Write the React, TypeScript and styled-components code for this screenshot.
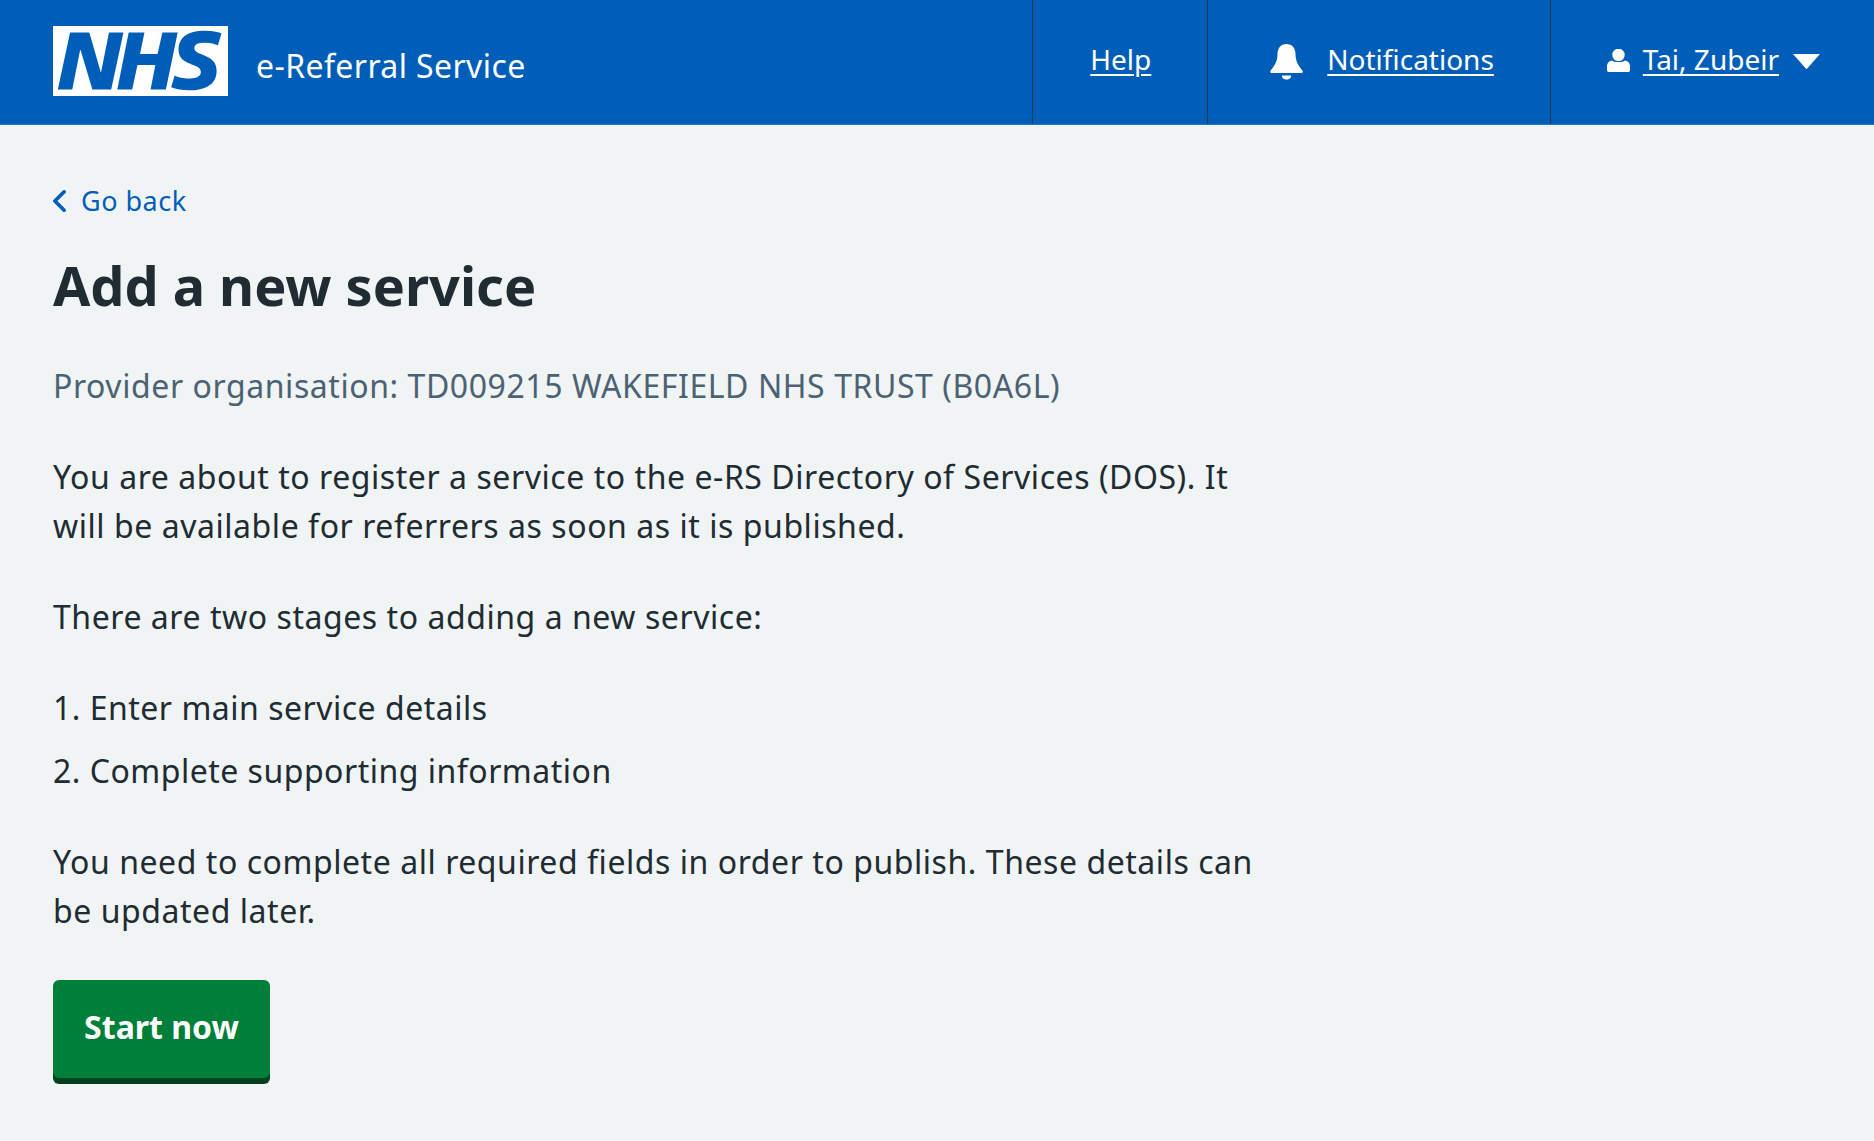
import React from 'react';
import styled, { createGlobalStyle } from 'styled-components';

const GlobalStyle = createGlobalStyle`
    html, body {
        margin: 0;
        padding: 0;
        min-height: 100%;
        background: #f0f4f5;
    }

    body {
        font-family: "Noto Sans", "Open Sans", Arial, sans-serif;
        color: #212b32;
    }
`;

const Header = styled.header`
    display: flex;
    align-items: stretch;
    height: 124px;
    background: #005eb8;
    border-bottom: 1px solid #1f77cc;
`;

const Brand = styled.div`
    flex: 1;
    display: flex;
    align-items: center;
    gap: 28px;
    padding-left: 53px;
    padding-bottom: 3px;
`;

const ServiceName = styled.span`
    margin-top: 10px;
    font-size: 32px;
    letter-spacing: 0.4px;
    color: #fff;
`;

const NavCell = styled.div<{ $left: number; $right: number }>`
    display: flex;
    align-items: center;
    padding: 0 ${(p) => p.$right}px 6px ${(p) => p.$left}px;
    border-left: 1px solid #1d3a5c;
    color: #fff;
`;

const NavLink = styled.a`
    font-size: 28px;
    color: #fff;
    text-decoration: underline;
    text-underline-offset: 4px;
    text-decoration-thickness: 2px;
`;

const BellIcon = styled.svg`
    margin: 6px 24px 0 0;
`;

const UserIcon = styled.svg`
    margin: 3px 13px 0 0;
`;

const Caret = styled.svg`
    margin: 5px 0 0 14px;
`;

const Page = styled.main`
    padding: 57px 53px 57px;
`;

const BackLink = styled.a`
    display: flex;
    align-items: center;
    gap: 15px;
    font-size: 27px;
    line-height: 38px;
    letter-spacing: 0.5px;
    color: #005eb8;
`;

const Title = styled.h1`
    margin: 31px 0 0;
    font-size: 54px;
    line-height: 68px;
    font-weight: 700;
`;

const Content = styled.div`
    max-width: 1210px;
`;

const Caption = styled.p`
    margin: 42px 0 0;
    font-size: 32px;
    line-height: 49px;
    letter-spacing: 0.57px;
    color: #4c6272;
`;

const Para = styled.p`
    margin: 42px 0 0;
    font-size: 32px;
    line-height: 49px;
    letter-spacing: 0.55px;
`;

const Steps = styled.ol`
    margin: 42px 0 0;
    padding: 0;
    list-style: none;
    display: flex;
    flex-direction: column;
    gap: 14px;
`;

const Step = styled.li`
    font-size: 32px;
    line-height: 49px;
    letter-spacing: 0.5px;
`;

const StartButton = styled.button`
    display: block;
    width: 217px;
    height: 98px;
    margin-top: 45px;
    padding: 0 0 6px;
    border: 0;
    border-radius: 6px;
    background: #007f3b;
    box-shadow: 0 6px 0 #00401e;
    font-family: inherit;
    font-size: 32px;
    font-weight: 700;
    color: #fff;
`;

export default function App() {
    return (
        <>
            <GlobalStyle />
            <Header>
                <Brand>
                    <svg width="175" height="70" viewBox="0 0 40 16">
                        <path fill="#fff" d="M0 0h40v16H0z" />
                        <path
                            fill="#005eb8"
                            d="M3.9 1.5h4.4l2.6 9h.1l1.8-9h3.3l-2.8 13H9l-2.7-9h-.1l-1.8 9H1.1M17.3 1.5h3.6l-1 4.9h4L25 1.5h3.5l-2.7 13h-3.5l1.1-5.6h-4.1l-1.2 5.6h-3.4M37.7 4.4c-.7-.3-1.6-.6-2.9-.6-1.4 0-2.5.2-2.5 1.3 0 1.8 5.1 1.2 5.1 5.1 0 3.6-3.3 4.5-6.4 4.5-1.3 0-2.9-.3-4-.7l.8-2.7c.7.4 2.1.7 3.2.7s2.8-.2 2.8-1.5c0-2.1-5.1-1.3-5.1-5 0-3.4 2.9-4.4 5.8-4.4 1.6 0 3.1.2 4 .6"
                        />
                    </svg>
                    <ServiceName>e-Referral Service</ServiceName>
                </Brand>
                <NavCell $left={57} $right={56}>
                    <NavLink>Help</NavLink>
                </NavCell>
                <NavCell $left={62} $right={56}>
                    <BellIcon width="33" height="36" viewBox="0 0 33 36">
                        <path
                            fill="#fff"
                            d="M16.500 0C22 0 25.500 4 25.500 10c0 7 2.500 11 6.500 16 1.500 2 .5 3-1 3H2c-1.500 0-2.500-1-1-3 4-5 6.500-9 6.500-16C7.500 4 11 0 16.500 0z"
                        />
                        <path fill="#fff" d="M12 31.500h9c.5 2.500-2 4-4.500 4s-5-1.500-4.500-4z" />
                    </BellIcon>
                    <NavLink>Notifications</NavLink>
                </NavCell>
                <NavCell $left={56} $right={54}>
                    <UserIcon width="23" height="23" viewBox="0 0 23 23">
                        <circle fill="#fff" cx="11.500" cy="6" r="6.200" />
                        <path
                            fill="#fff"
                            d="M5 11.500c2 2 11 2 13 0 3 .5 5 2.500 5 5.500v4c0 1.500-1 2-2 2H2c-1 0-2-.5-2-2v-4c0-3 2-5 5-5.500z"
                        />
                    </UserIcon>
                    <NavLink>Tai, Zubeir</NavLink>
                    <Caret width="27" height="15" viewBox="0 0 27 15">
                        <path fill="#fff" d="M0 0h27L14.200 14.600c-.4.400-1 .4-1.400 0z" />
                    </Caret>
                </NavCell>
            </Header>
            <Page>
                <BackLink>
                    <svg width="13" height="22" viewBox="8.500 6 7 12" preserveAspectRatio="none">
                        <path
                            fill="#005eb8"
                            d="M8.500 12c0-.3.100-.5.300-.7l5-5c.4-.4 1-.4 1.400 0s.4 1 0 1.400L10.900 12l4.300 4.300c.4.400.4 1 0 1.400s-1 .4-1.400 0l-5-5c-.2-.2-.3-.4-.3-.7z"
                        />
                    </svg>
                    Go back
                </BackLink>
                <Title>Add a new service</Title>
                <Content>
                    <Caption>Provider organisation: TD009215 WAKEFIELD NHS TRUST (B0A6L)</Caption>
                    <Para>
                        You are about to register a service to the e-RS Directory of Services (DOS). It will be
                        available for referrers as soon as it is published.
                    </Para>
                    <Para>There are two stages to adding a new service:</Para>
                    <Steps>
                        <Step>1. Enter main service details</Step>
                        <Step>2. Complete supporting information</Step>
                    </Steps>
                    <Para>
                        You need to complete all required fields in order to publish. These details can be updated
                        later.
                    </Para>
                </Content>
                <StartButton>Start now</StartButton>
            </Page>
        </>
    );
}
